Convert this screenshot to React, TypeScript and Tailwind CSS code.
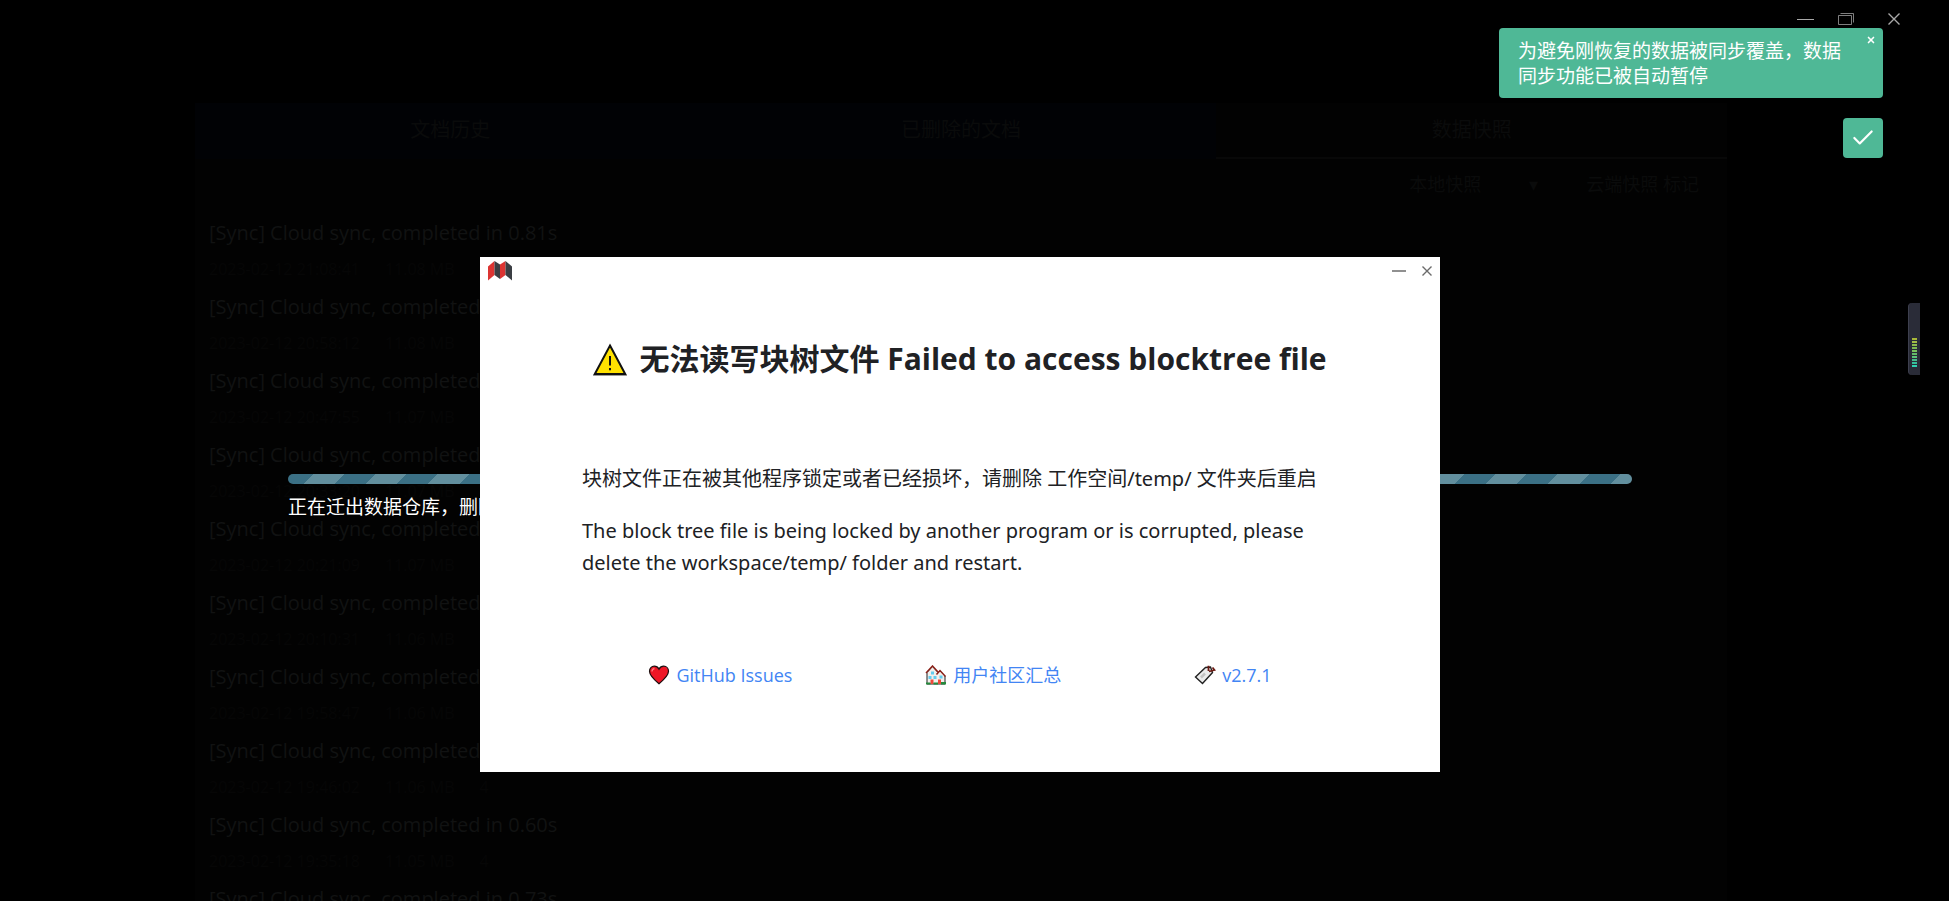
import { Check, X } from "lucide-react"

const logRows = [
  { title: "[Sync] Cloud sync, completed in 0.81s", meta: "2023-02-12 21:08:41      11.08 MB      4" },
  { title: "[Sync] Cloud sync, completed in 0.57s", meta: "2023-02-12 20:58:12      11.08 MB      4" },
  { title: "[Sync] Cloud sync, completed in 0.63s", meta: "2023-02-12 20:47:55      11.07 MB      4" },
  { title: "[Sync] Cloud sync, completed in 0.71s", meta: "2023-02-12 20:33:20      11.07 MB      4" },
  { title: "[Sync] Cloud sync, completed in 0.66s", meta: "2023-02-12 20:21:09      11.07 MB      4" },
  { title: "[Sync] Cloud sync, completed in 0.59s", meta: "2023-02-12 20:10:31      11.06 MB      4" },
  { title: "[Sync] Cloud sync, completed in 0.74s", meta: "2023-02-12 19:58:47      11.06 MB      4" },
  { title: "[Sync] Cloud sync, completed in 0.62s", meta: "2023-02-12 19:46:02      11.06 MB      4" },
  { title: "[Sync] Cloud sync, completed in 0.60s", meta: "2023-02-12 19:35:18      11.05 MB      4" },
  { title: "[Sync] Cloud sync, completed in 0.73s", meta: "2023-02-12 19:20:44      11.05 MB      4" },
]

const meterCells = [
  "bg-[#a8b83a]",
  "bg-[#a3bd45]",
  "bg-[#8dbb4c]",
  "bg-[#7dbb52]",
  "bg-[#78c25c]",
  "bg-[#62bd68]",
  "bg-[#5cc47a]",
  "bg-[#45bd8c]",
  "bg-[#35bf9a]",
  "bg-[#2fd0b0]",
]

function Logo() {
  return (
    <svg width="24" height="20" viewBox="0 0 24 20" aria-hidden="true">
      <path d="M0 5.500 6.500 0V14L0 19.500z" fill="#dc3432" />
      <path d="M6.500 0 12 3.500V18L6.500 14z" fill="#3b3e43" />
      <path d="M12 3.500 17.500 0V14L12 18z" fill="#dc3432" />
      <path d="M17.500 0 24 5.500V19.500L17.500 14z" fill="#3b3e43" />
    </svg>
  )
}

function WarningIcon() {
  return (
    <svg width="34" height="33" viewBox="0 0 34 33" aria-hidden="true">
      <path d="M0 32.500h34" stroke="#9a9a9a" />
      <path d="M17 2.500 32.200 31H1.800z" fill="#ffe100" stroke="#111" strokeWidth="2" />
      <path d="M17 13v9.500M17 25v2.200" stroke="#111" strokeWidth="2" />
    </svg>
  )
}

function HeartIcon() {
  return (
    <svg width="22" height="20" viewBox="0 0 22 20" aria-hidden="true">
      <path
        d="M11 18.800C6 14.500 1.500 10.500 1.500 6.200 1.500 3.200 3.600 1.200 6.200 1.200c2 0 3.800 1 4.800 3 1-2 2.800-3 4.800-3 2.600 0 4.700 2 4.700 5 0 4.300-4.500 8.300-9.500 12.600z"
        fill="#ee1626"
        stroke="#1c1010"
        strokeWidth="1.200"
      />
      <path d="M4 6.500C4 4.800 5 3.800 6.500 3.600" fill="none" stroke="#ff7b80" strokeWidth="1.200" />
    </svg>
  )
}

function HouseIcon() {
  return (
    <svg width="22" height="20" viewBox="0 0 22 20" aria-hidden="true">
      <path d="M2 19V7.500l5.500-6 5.500 6 2-1.500 5 5V19z" fill="#f2efec" stroke="#222" />
      <path d="M1 8 7.500 1 13 7" fill="none" stroke="#8a2018" strokeWidth="1.500" />
      <path d="M11.500 9.500 15 5.500l5.500 6" fill="none" stroke="#8a2018" strokeWidth="1.500" />
      <path d="M6 6.500h3v3H6zM3.500 11h3v3h-3zM8.500 11h3v3h-3zM14.500 10.500h3v3h-3z" fill="#62cdf0" />
      <path d="M5.500 14.500h3V19h-3zM13 14.500h3V19h-3z" fill="#f0483a" />
      <path d="M1 17.500h4.500v2H1zM8.500 17.500H13v2H8.500zM16 17h5v2.500h-5z" fill="#258a3c" />
    </svg>
  )
}

function TagIcon() {
  return (
    <svg width="22" height="20" viewBox="0 0 22 20" aria-hidden="true">
      <path d="M1.500 12 11.500 2.500l5-.5 2 5.500L8.500 18.500z" fill="#ececec" stroke="#222" strokeWidth="1.400" />
      <path d="M7 12.500 11 8.500" stroke="#c4c4c4" strokeWidth="2.500" />
      <path d="M14.500 6V.8M15 6.500 20.500 5 18.500 2.500" fill="none" stroke="#6b1a12" strokeWidth="1.800" />
    </svg>
  )
}

function Backdrop() {
  return (
    <div aria-hidden="true" className="flex h-full select-none pt-[103px]">
      <div className="w-[195px] shrink-0" />
      <div className="mr-[193px] min-w-0 flex-1 bg-[#020202]">
        <div className="grid grid-cols-3 text-center text-[20px] leading-[54px] text-[#0a0b0b]">
          <span className="bg-[#010205]">文档历史</span>
          <span className="bg-[#010205]">已删除的文档</span>
          <span className="border-b-2 border-[#080808]">数据快照</span>
        </div>
        <div className="flex h-[54px] items-center justify-end gap-12 pr-7 pb-1 text-[18px] text-[#0a0b0b]">
          <span>本地快照</span>
          <span>▾</span>
          <span>云端快照 标记</span>
        </div>
        <div className="px-[14px]">
          {logRows.map((row) => (
            <div key={row.title} className="flex h-[74px] flex-col text-[20px] leading-[40px] whitespace-pre text-[#111212]">
              <span>{row.title}</span>
              <span className="text-[16px] leading-[32px] text-[#060606]">{row.meta}</span>
            </div>
          ))}
        </div>
      </div>
    </div>
  )
}

function Progress() {
  return (
    <div className="absolute inset-x-0 top-[474px] mx-auto w-[70%]">
      <div
        role="progressbar"
        aria-label="正在迁出数据仓库"
        className="h-[10px] rounded-full bg-[#3b7085] bg-[repeating-linear-gradient(135deg,#3b7085_0_18px,#628f9e_18px_40px,#3b7085_40px_44px)]"
      />
      <p className="mt-[9px] text-[19px] leading-[28px] text-white">正在迁出数据仓库，删除本地多余的文件</p>
    </div>
  )
}

function WindowControls() {
  return (
    <div className="absolute top-0 right-[18px] flex h-[38px] items-center gap-6 text-[#a8a8a8]">
      <button aria-label="最小化" className="flex w-4 justify-center">
        <svg width="18" height="12" viewBox="0 0 18 12" className="shrink-0">
          <path d="M0 6.500h17" stroke="currentColor" />
        </svg>
      </button>
      <button aria-label="还原" className="flex w-4 justify-center">
        <svg width="17" height="12" viewBox="0 0 17 12" className="shrink-0" fill="none" stroke="currentColor">
          <path d="M.5 2.500h13v9H.5zM2.500.5h13v9" strokeOpacity=".75" />
        </svg>
      </button>
      <button aria-label="关闭" className="ml-2 flex w-4 justify-center">
        <svg width="12" height="12" viewBox="0 0 12 12" className="shrink-0" stroke="currentColor" strokeWidth="1.400">
          <path d="M.5.5l11 11M11.500.5l-11 11" />
        </svg>
      </button>
    </div>
  )
}

function Toasts() {
  return (
    <div className="absolute top-7 right-[37px] flex flex-col items-end gap-5">
      <div role="status" className="relative w-96 rounded bg-[#4fb896] pt-[11px] pr-8 pb-[9px] pl-[19px] text-[19px] leading-[25px] text-white">
        为避免刚恢复的数据被同步覆盖，数据同步功能已被自动暂停
        <button aria-label="关闭通知" className="absolute top-[7px] right-[7px]">
          <X size={10} strokeWidth={4} />
        </button>
      </div>
      <button aria-label="完成" className="flex size-10 items-center justify-center rounded bg-[#4fb896] text-white">
        <Check size={26} strokeWidth={2} />
      </button>
    </div>
  )
}

function Meter() {
  return (
    <div className="absolute top-[303px] right-0 flex h-[72px] w-3 flex-col items-center justify-end gap-px rounded-l border-l border-[#3d3f4e] bg-[#2a2c38] pb-2">
      {meterCells.map((cell) => (
        <span key={cell} className={`h-[2px] w-[5px] ${cell}`} />
      ))}
    </div>
  )
}

function ErrorDialog() {
  return (
    <section
      role="dialog"
      aria-labelledby="error-title"
      className="absolute inset-x-0 top-[257px] mx-auto w-[960px] max-w-full bg-white pb-[81px] text-[#202124]"
    >
      <header className="flex h-[28px] items-center justify-between px-2 text-[#6b6b6b]">
        <Logo />
        <div className="flex items-center gap-4">
          <button aria-label="最小化">
            <svg width="14" height="12" viewBox="0 0 14 12">
              <path d="M0 6h14" stroke="currentColor" strokeWidth="1.500" />
            </svg>
          </button>
          <button aria-label="关闭">
            <svg width="10" height="10" viewBox="0 0 10 10" stroke="currentColor" strokeWidth="1.400">
              <path d="M.5.5l9 9M9.500.5l-9 9" />
            </svg>
          </button>
        </div>
      </header>
      <h1 id="error-title" className="mt-[50px] flex items-center justify-center gap-3 text-[30px] leading-[48px] font-bold">
        <WarningIcon />
        无法读写块树文件 Failed to access blocktree file
      </h1>
      <div className="mt-[80px] space-y-5 px-[102px] font-['Noto_Sans','Noto_Sans_CJK_SC',sans-serif] text-[20px] leading-[32px]">
        <p>块树文件正在被其他程序锁定或者已经损坏，请删除 工作空间/temp/ 文件夹后重启</p>
        <p>The block tree file is being locked by another program or is corrupted, please delete the workspace/temp/ folder and restart.</p>
      </div>
      <nav className="mt-[80px] flex justify-around px-[102px] text-[18px] leading-[32px] text-[#4285f4]">
        <a href="#issues" className="flex items-center gap-[6px]">
          <HeartIcon />
          GitHub Issues
        </a>
        <a href="#community" className="flex items-center gap-[6px]">
          <HouseIcon />
          用户社区汇总
        </a>
        <a href="#version" className="flex items-center gap-[6px]">
          <TagIcon />
          v2.7.1
        </a>
      </nav>
    </section>
  )
}

export default function App() {
  return (
    <div className="h-screen overflow-hidden bg-black pr-[29px] font-['Open_Sans','Noto_Sans_CJK_SC',sans-serif]">
      <main className="relative h-full">
        <Backdrop />
        <Progress />
        <WindowControls />
        <Toasts />
        <Meter />
        <ErrorDialog />
      </main>
    </div>
  )
}
